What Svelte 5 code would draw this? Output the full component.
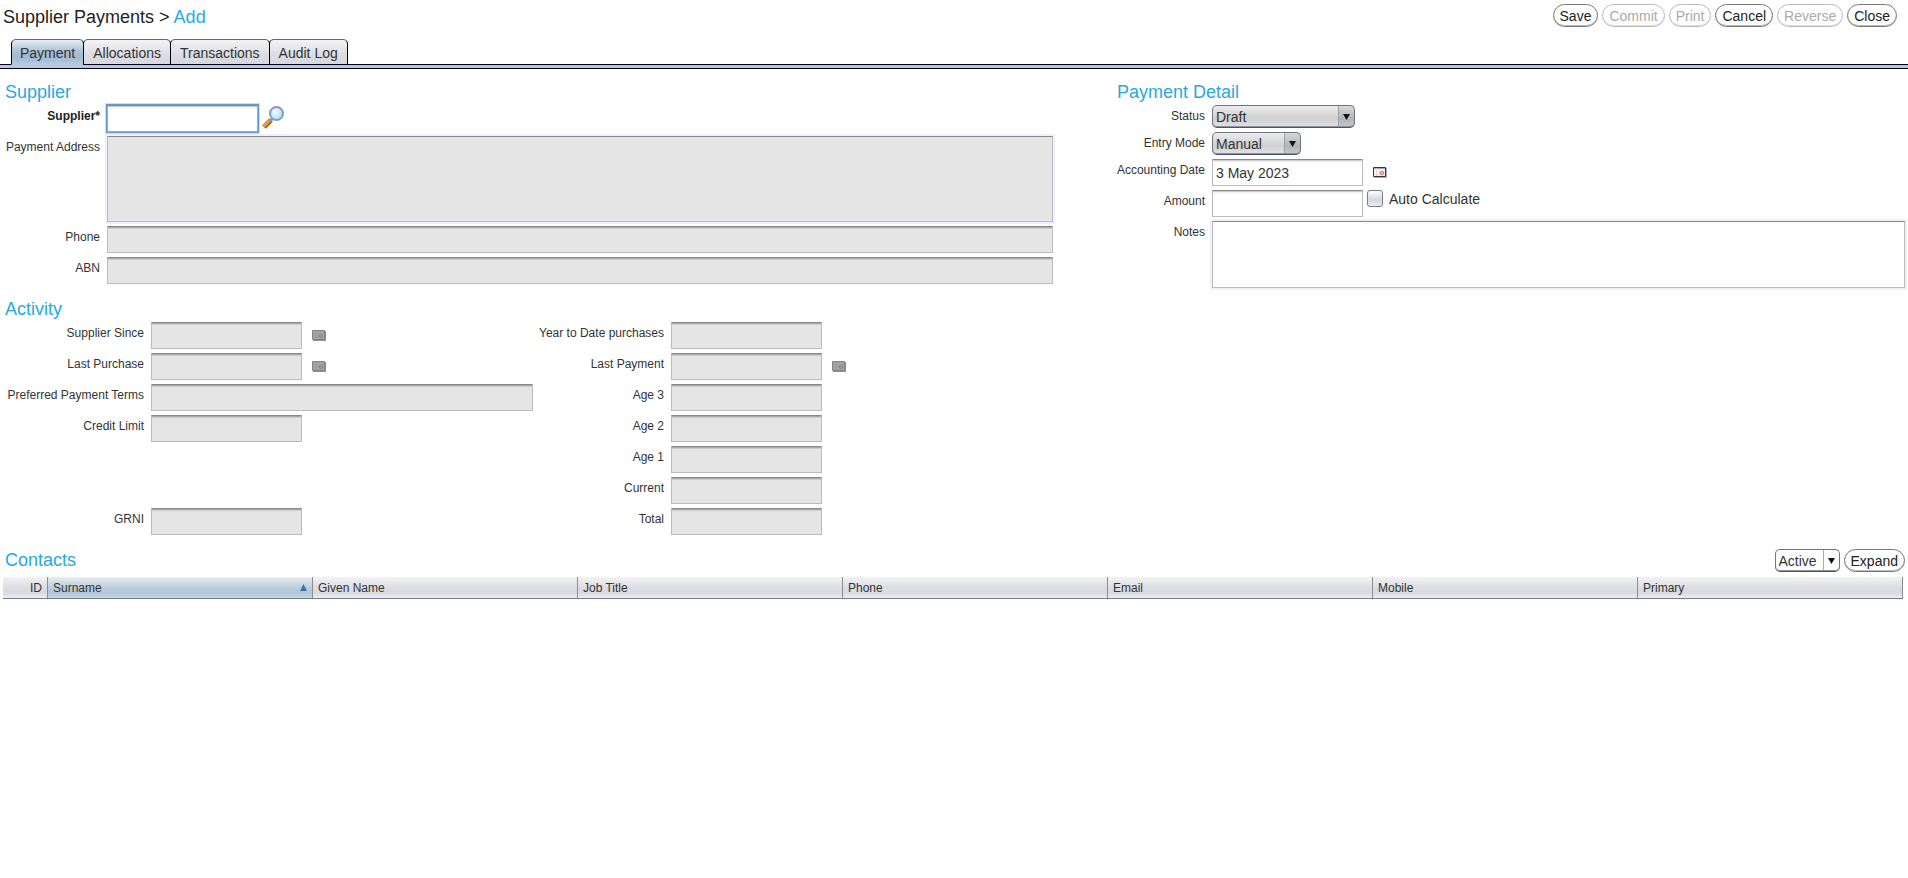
<script lang="ts">
  const actions = [
    { label: 'Save', enabled: true },
    { label: 'Commit', enabled: false },
    { label: 'Print', enabled: false },
    { label: 'Cancel', enabled: true },
    { label: 'Reverse', enabled: false },
    { label: 'Close', enabled: true }
  ];
  const tabs = ['Payment', 'Allocations', 'Transactions', 'Audit Log'];
  const history = [
    { id: 'since', label: 'Supplier Since', row: 1, date: true },
    { id: 'purchase', label: 'Last Purchase', row: 2, date: true },
    { id: 'terms', label: 'Preferred Payment Terms', row: 3, wide: true },
    { id: 'limit', label: 'Credit Limit', row: 4 },
    { id: 'grni', label: 'GRNI', row: 7 }
  ];
  const balances = [
    { id: 'ytd', label: 'Year to Date purchases', row: 1 },
    { id: 'payment', label: 'Last Payment', row: 2, date: true },
    { id: 'age3', label: 'Age 3', row: 3 },
    { id: 'age2', label: 'Age 2', row: 4 },
    { id: 'age1', label: 'Age 1', row: 5 },
    { id: 'current', label: 'Current', row: 6 },
    { id: 'total', label: 'Total', row: 7 }
  ];
  const columns = ['Given Name', 'Job Title', 'Phone', 'Email', 'Mobile', 'Primary'];

  let active = $state('Payment');
  let accountingDate = $state('3 May 2023');
</script>

{#snippet calendar(off)}
  <svg class="calendar" width="14" height="11" viewBox="0 0 14 11" aria-hidden="true">
    {#if off}
      <path d="M1 1h13v10H1z" fill="#8e8e8e" />
      <path d="M.5.5h12v9H.5z" fill="#a3a3a3" stroke="#858585" />
      <path d="M3.5 3v5M6 3v5" stroke="#999" />
      <circle cx="9" cy="6" r="1.5" fill="none" stroke="#858585" />
    {:else}
      <path d="M1 1h13v10H1z" fill="#b5adad" />
      <path d="M.5.5h12v9H.5z" fill="#f4f2f2" stroke="#3c3434" />
      <path d="M1 1h11v1H1z" fill="#86a5d8" />
      <path d="M2 1h3v1H2z" fill="#f0b040" />
      <path d="M3.5 3v6M6.5 3v6" stroke="#ddd5d5" />
      <circle cx="9" cy="6" r="1.5" fill="#fff" stroke="#e04848" />
    {/if}
  </svg>
{/snippet}

{#snippet row(f)}
  <label for={f.id} style:grid-row={f.row}>{f.label}</label>
  <div class="line" style:grid-row={f.row}>
    <input id={f.id} class="box" class:short={!f.wide} type="text" disabled />
    {#if f.date}
      <button class="icon" type="button" disabled aria-label="{f.label} calendar">{@render calendar(true)}</button>
    {/if}
  </div>
{/snippet}

<header>
  <h1>Supplier Payments &gt; <span>Add</span></h1>
  <div class="actions">
    {#each actions as a}
      <button class="pill" type="button" disabled={!a.enabled}>{a.label}</button>
    {/each}
  </div>
</header>

<nav>
  {#each tabs as tab}
    <button type="button" class:active={active === tab} onclick={() => (active = tab)}>{tab}</button>
  {/each}
</nav>

<main>
  <div class="top">
    <section>
      <h2>Supplier</h2>
      <div class="form supplier">
        <label class="required" for="supplier">Supplier*</label>
        <div class="line">
          <input id="supplier" class="box short focused" type="text" />
          <button class="icon search" type="button" aria-label="Find supplier">
            <svg width="24" height="24" viewBox="0 0 24 24" aria-hidden="true">
              <defs>
                <radialGradient id="lens" cx=".4" cy=".35" r=".7">
                  <stop offset="0" stop-color="#f4fdff" />
                  <stop offset="1" stop-color="#a2dcf6" />
                </radialGradient>
              </defs>
              <path d="M9 14 2 21" stroke="#a85a1c" stroke-width="5" />
              <path d="M8.500 13.500 1.500 20.500" stroke="#f39a32" stroke-width="3" />
              <path d="m8 15 2-2" stroke="#9098a8" stroke-width="3" />
              <circle cx="14.500" cy="7.500" r="6.500" fill="url(#lens)" stroke="#8798c4" stroke-width="2" />
            </svg>
          </button>
        </div>
        <label for="address">Payment Address</label>
        <textarea id="address" class="address" disabled></textarea>
        <label for="phone">Phone</label>
        <input id="phone" class="box" type="text" disabled />
        <label for="abn">ABN</label>
        <input id="abn" class="box" type="text" disabled />
      </div>
    </section>

    <section>
      <h2>Payment Detail</h2>
      <div class="form detail">
        <label for="status">Status</label>
        <select id="status" class="grey status"><option>Draft</option></select>
        <label for="mode">Entry Mode</label>
        <select id="mode" class="grey mode"><option>Manual</option></select>
        <label for="date">Accounting Date</label>
        <div class="line">
          <input id="date" class="box short" type="text" bind:value={accountingDate} />
          <button class="icon" type="button" aria-label="Pick accounting date">{@render calendar(false)}</button>
        </div>
        <label for="amount">Amount</label>
        <div class="line">
          <input id="amount" class="box short" type="text" />
          <label class="check"><input type="checkbox" />Auto Calculate</label>
        </div>
        <label for="notes">Notes</label>
        <textarea id="notes" class="notes"></textarea>
      </div>
    </section>
  </div>

  <section>
    <h2>Activity</h2>
    <div class="activity">
      <div class="form history">
        {#each history as f}{@render row(f)}{/each}
      </div>
      <div class="form balances">
        {#each balances as f}{@render row(f)}{/each}
      </div>
    </div>
  </section>

  <section>
    <div class="bar">
      <h2>Contacts</h2>
      <div class="actions">
        <select class="filter" aria-label="Contact filter"><option>Active</option></select>
        <button class="pill" type="button">Expand</button>
      </div>
    </div>
    <table>
      <thead>
        <tr>
          <th class="id">ID</th>
          <th class="sorted" aria-sort="ascending">
            <div>Surname<svg width="7" height="7" viewBox="0 0 7 7" aria-hidden="true"><path d="M3.500 0 7 7H0z" fill="#3d72a8" /></svg></div>
          </th>
          {#each columns as c}<th>{c}</th>{/each}
        </tr>
      </thead>
    </table>
  </section>
</main>

<style>
  :global(body) {
    background: #fff;
    color: #333;
    font: 14px/16px "Liberation Sans", Arial, sans-serif;
  }
  h1, h2 {
    margin: 0;
    font-size: 18px;
    font-weight: normal;
    line-height: 25px;
  }
  h1 {
    line-height: 27px;
    color: #222;
  }
  h1 span, h2 { color: #27a9e1; }
  h2 { padding-left: 2px; }
  button, input, select, textarea {
    box-sizing: border-box;
    margin: 0;
    font: inherit;
    color: inherit;
  }
  header {
    display: flex;
    justify-content: space-between;
    align-items: flex-start;
    padding: 4px 11px 0 3px;
    height: 35px;
    box-sizing: border-box;
  }
  .actions {
    display: flex;
    gap: 4px;
  }
  .pill {
    height: 23px;
    padding: 1px 6px 0;
    border: 1px solid #777;
    border-radius: 12px;
    box-shadow: inset 0 -1px #bbb;
    background: #fff;
    color: #222;
  }
  .pill:disabled {
    border-color: #bbb;
    box-shadow: inset 0 -1px #ddd;
    color: #aaa;
  }
  nav {
    display: flex;
    padding: 4px 11px 0;
    border-bottom: 1px solid #001;
    box-shadow: 0 3px #b4cae4, 0 4px #001;
  }
  nav button {
    height: 26px;
    padding: 1px 9px 0;
    margin: 0 -1px -1px 0;
    border: 1px solid #001;
    border-top-color: #666;
    border-radius: 5px 5px 0 0;
    background: linear-gradient(#f4f4f7, #dcdde3 60%, #d8d9df);
  }
  nav button.active {
    padding: 1px 8px 0;
    border-bottom-color: #b4cae4;
    background: linear-gradient(#e6edf3, #a9bfd3 50%, #a3bad0 75%, #b4cae0);
  }
  main {
    padding: 15px 3px 0;
  }
  .top {
    display: grid;
    grid-template-columns: 105fr 79fr;
    gap: 62px;
  }
  .top + section { margin-top: 9px; }
  .form {
    display: grid;
    gap: 4px 7px;
    align-content: start;
  }
  .supplier { grid-template-columns: 97px 1fr; }
  .detail { grid-template-columns: 90px 1fr; }
  .history { grid-template-columns: 141px 382px; }
  .balances { grid-template-columns: 131px auto; }
  .history, .balances { grid-template-rows: repeat(7, 27px); }
  .activity { display: flex; }
  .form > label {
    padding-top: 4px;
    text-align: right;
    font-size: 12px;
    line-height: 14px;
    white-space: nowrap;
  }
  .form > .required {
    font-weight: bold;
    color: #222;
  }
  .line {
    display: flex;
    gap: 4px;
    align-items: flex-start;
  }
  .box {
    width: 100%;
    height: 27px;
    padding: 1px 3px 0;
    border: 1px solid #bbb;
    border-top-color: #888;
    background: linear-gradient(#ccc 1px, #eee 1px, #fff 3px);
  }
  .box:disabled {
    background: linear-gradient(#aaa 1px, #ccc 1px, #ccc 2px, #e5e5e5 2px);
  }
  .short { width: 151px; }
  .focused {
    outline: 1px solid #5e9cd3;
    border-color: #8fb0d0;
    border-top-color: #888;
    box-shadow: 0 0 0 2px #cfdff0;
  }
  textarea {
    display: block;
    width: 100%;
    padding: 3px;
    border: 1px solid #bbb;
    border-top-color: #888;
    box-shadow: 0 0 0 2px #f0f0fd;
    background: #fff;
    resize: none;
  }
  textarea:disabled { background: #e5e5e5; }
  .address { height: 86px; }
  .notes { height: 67px; }
  .icon {
    display: block;
    padding: 8px 6px;
    border: 0;
    background: none;
  }
  .icon svg { display: block; }
  .search { padding: 1px 0; }
  .check {
    display: flex;
    gap: 6px;
    line-height: 18px;
  }
  .check input {
    appearance: none;
    width: 16px;
    height: 17px;
    border: 1px solid #777c88;
    border-radius: 3px;
    background: linear-gradient(#fdfdfe, #d4d7de 60%, #eceef4);
  }
  select {
    appearance: none;
    height: 23px;
    padding: 1px 20px 0 3px;
    border: 1px solid #6d7680;
    border-bottom-color: #4a5664;
    border-radius: 5px;
    box-shadow: inset 0 -1px #8a929c;
    background:
      url("data:image/svg+xml,%3Csvg xmlns='http://www.w3.org/2000/svg' width='7' height='6'%3E%3Cpath d='M0 0h7L3.500 6z' fill='%23111'/%3E%3C/svg%3E") right 4px center no-repeat,
      linear-gradient(#aaa, #aaa) right 15px top / 1px 100% no-repeat,
      #fff;
  }
  .grey {
    background:
      url("data:image/svg+xml,%3Csvg xmlns='http://www.w3.org/2000/svg' width='7' height='6'%3E%3Cpath d='M0 0h7L3.500 6z' fill='%23111'/%3E%3C/svg%3E") right 4px center no-repeat,
      linear-gradient(#98a2ac, #98a2ac) right 15px top / 1px 100% no-repeat,
      linear-gradient(#d8d8d8, #b4b4b4 60%, #c8c8c8) right top / 15px 100% no-repeat,
      linear-gradient(#ececec, #d0d0d0 60%, #e2e2e2);
  }
  .status { width: 143px; }
  .mode { width: 89px; }
  .filter { width: 65px; }
  .bar {
    display: flex;
    justify-content: space-between;
    padding: 13px 0 4px;
  }
  .bar .actions { padding-top: 1px; }
  table {
    width: calc(100% - 2px);
    border-collapse: separate;
    border-spacing: 0;
    table-layout: fixed;
    border-bottom: 1px solid #777b88;
    font-size: 12px;
    line-height: 14px;
  }
  th {
    height: 21px;
    padding: 0 5px;
    border-right: 1px solid #8a8d98;
    background: linear-gradient(#f3f3f6, #dcdde2 50%, #d8dae0 75%, #ecedf8);
    font-weight: normal;
    text-align: left;
  }
  .id {
    width: 34px;
    text-align: right;
  }
  .sorted { background: linear-gradient(#e8eef3, #b8cbd9 55%, #b2c7d7 75%, #c4d6e6); }
  .sorted div {
    display: flex;
    justify-content: space-between;
    align-items: center;
  }
</style>
